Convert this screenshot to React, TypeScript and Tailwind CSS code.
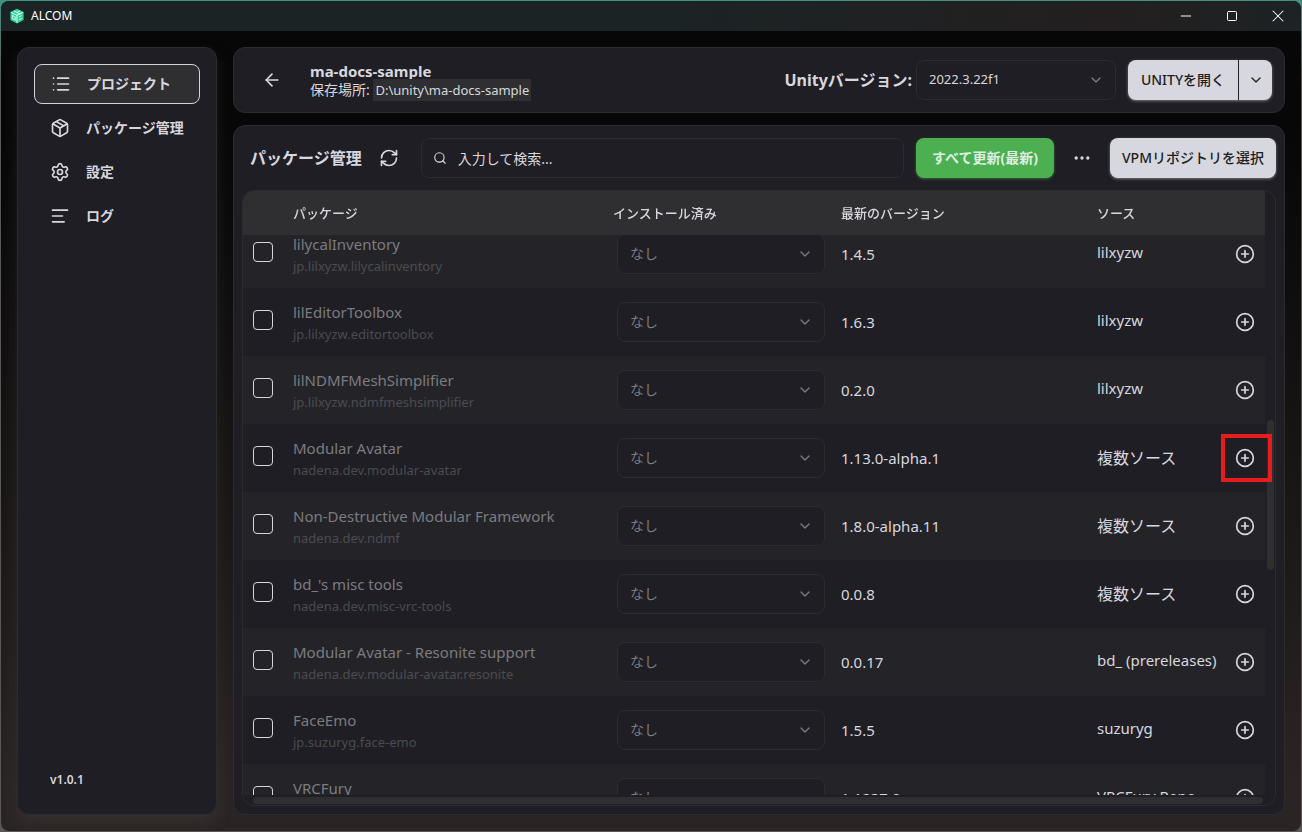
import { useEffect, useRef } from "react";
import {
  AlignLeft,
  ArrowLeft,
  ChevronDown,
  CirclePlus,
  Ellipsis,
  List,
  Minus,
  Package,
  RefreshCw,
  Search,
  Settings,
  Square,
  X,
} from "lucide-react";

type PackageRow = {
  name: string;
  id: string;
  latest: string;
  source: string;
  multipleSources?: boolean;
  highlighted?: boolean;
};

const packages: PackageRow[] = [
  { name: "lilycalInventory", id: "jp.lilxyzw.lilycalinventory", latest: "1.4.5", source: "lilxyzw" },
  { name: "lilEditorToolbox", id: "jp.lilxyzw.editortoolbox", latest: "1.6.3", source: "lilxyzw" },
  { name: "lilNDMFMeshSimplifier", id: "jp.lilxyzw.ndmfmeshsimplifier", latest: "0.2.0", source: "lilxyzw" },
  { name: "Modular Avatar", id: "nadena.dev.modular-avatar", latest: "1.13.0-alpha.1", source: "複数ソース", multipleSources: true, highlighted: true },
  { name: "Non-Destructive Modular Framework", id: "nadena.dev.ndmf", latest: "1.8.0-alpha.11", source: "複数ソース", multipleSources: true },
  { name: "bd_'s misc tools", id: "nadena.dev.misc-vrc-tools", latest: "0.0.8", source: "複数ソース", multipleSources: true },
  { name: "Modular Avatar - Resonite support", id: "nadena.dev.modular-avatar.resonite", latest: "0.0.17", source: "bd_ (prereleases)" },
  { name: "FaceEmo", id: "jp.suzuryg.face-emo", latest: "1.5.5", source: "suzuryg" },
  { name: "VRCFury", id: "com.vrcfury.vrcfury", latest: "1.1237.0", source: "VRCFury Repo" },
];

const navItems = [
  { label: "プロジェクト", icon: List, active: true },
  { label: "パッケージ管理", icon: Package, active: false },
  { label: "設定", icon: Settings, active: false },
  { label: "ログ", icon: AlignLeft, active: false },
];

function AppLogo() {
  return (
    <svg viewBox="0 0 16 16" className="size-4" aria-hidden="true">
      <path d="M8 .8 14.6 4v8L8 15.4 1.4 12V4Z" fill="#2fd19a" />
      <path d="M2 4.4 8 7.3v7.4M14 4.4 8 7.3M4.8 2.9l6.3 3M11.2 2.9 8 4.4" fill="none" stroke="#e4fff5" strokeWidth="1" />
      <path d="M3.4 7.4v3.2l2.8 1.5V8.9ZM9.8 9l2.8-1.4M9.8 11.8l2.8-1.4" fill="none" stroke="#d4fbec" strokeWidth="1" />
    </svg>
  );
}

function TitleBar() {
  return (
    <header className="flex h-[30px] shrink-0 items-center justify-between bg-linear-to-r from-[#1b2325] from-50% via-[#231f20] via-85% to-[#1d2224] pl-2 text-white">
      <div className="flex items-center gap-1.5 text-xs">
        <AppLogo />
        <span>ALCOM</span>
      </div>
      <div className="flex h-full">
        <button aria-label="最小化" className="flex w-[46px] items-center justify-center">
          <Minus className="size-4" strokeWidth={1.5} />
        </button>
        <button aria-label="最大化" className="flex w-[46px] items-center justify-center">
          <Square className="size-3" strokeWidth={2} />
        </button>
        <button aria-label="閉じる" className="flex w-[46px] items-center justify-center">
          <X className="size-5" strokeWidth={1.25} />
        </button>
      </div>
    </header>
  );
}

function Sidebar() {
  return (
    <aside className="flex w-[200px] shrink-0 flex-col justify-between rounded-xl border border-[#2c2c2f] bg-[#1f1e24] p-4 shadow-[0_8px_16px_rgba(85,85,80,0.25)]">
      <nav className="flex flex-col gap-1">
        {navItems.map(({ label, icon: Icon, active }) => (
          <a
            key={label}
            href="#"
            className={
              active
                ? "flex h-10 items-center gap-4 rounded-lg border border-[#d4d4da] bg-[#2f2f31] px-4 text-sm font-semibold whitespace-nowrap"
                : "flex h-10 items-center gap-4 rounded-lg px-4 text-sm font-semibold whitespace-nowrap"
            }
          >
            <Icon className="size-5 shrink-0" />
            {label}
          </a>
        ))}
      </nav>
      <p className="px-4 pt-2.5 pb-2 text-xs leading-5 font-semibold">v1.0.1</p>
    </aside>
  );
}

function ProjectHeader() {
  return (
    <section className="flex h-[66px] shrink-0 items-center rounded-xl border border-[#2c2c2f] bg-[#1f1e24] pr-3 pl-[18px]">
      <button aria-label="戻る" className="flex size-10 items-center justify-center">
        <ArrowLeft className="size-5" />
      </button>
      <div className="ml-[18px] flex-1 pt-px">
        <h1 className="text-[15px] leading-[18px] font-bold">ma-docs-sample</h1>
        <p className="text-sm leading-5">
          保存場所: <span className="bg-[#2f2f31] px-0.5 py-0.5 text-[13px]">D:\unity\ma-docs-sample</span>
        </p>
      </div>
      <label htmlFor="unity-version" className="mr-1 font-bold">
        Unityバージョン:
      </label>
      <div className="relative mr-3">
        <select
          id="unity-version"
          className="h-10 w-[200px] appearance-none rounded-lg border border-[#2c2c2f] bg-transparent px-3 text-[13px]"
        >
          <option>2022.3.22f1</option>
        </select>
        <ChevronDown className="pointer-events-none absolute top-3 right-3 size-4 opacity-50" />
      </div>
      <div className="flex h-10 divide-x divide-[#1f1e24] rounded-lg bg-[#d7d7df] text-[#1f1e24] shadow-[0_1px_3px_rgba(215,215,223,0.5)]">
        <button className="w-[111px] text-sm font-medium">UNITYを開く</button>
        <button aria-label="その他の起動方法" className="flex w-[33px] items-center justify-center">
          <ChevronDown className="size-4" />
        </button>
      </div>
    </section>
  );
}

function Toolbar() {
  return (
    <div className="flex items-center">
      <h2 className="ml-2 text-base font-bold">パッケージ管理</h2>
      <button aria-label="再読み込み" className="ml-[7px] flex size-10 items-center justify-center">
        <RefreshCw className="size-5" />
      </button>
      <div className="relative ml-3 flex-1">
        <Search className="absolute top-[13px] left-3 size-3.5" />
        <input
          type="search"
          aria-label="パッケージを検索"
          placeholder="入力して検索..."
          className="h-10 w-full rounded-lg border border-[#2c2c2f] bg-transparent pr-3 pl-9 text-sm placeholder:text-[#d7d7df]"
        />
      </div>
      <button className="ml-3 h-10 w-[138px] rounded-lg bg-[#4caf50] text-sm font-bold text-[#dfeee4] shadow-[0_1px_3px_rgba(76,175,80,0.5)]">
        すべて更新(最新)
      </button>
      <button aria-label="その他の操作" className="mx-2 flex size-10 items-center justify-center">
        <Ellipsis className="size-5" />
      </button>
      <button className="h-10 w-[166px] rounded-lg bg-[#d7d7df] text-sm font-medium whitespace-nowrap text-[#1f1e24] shadow-[0_1px_3px_rgba(215,215,223,0.5)]">
        VPMリポジトリを選択
      </button>
    </div>
  );
}

function PackageTableRow({ pkg }: { pkg: PackageRow }) {
  return (
    <tr className="h-[68px] odd:bg-[#242428]">
      <td className="pb-[5px] pl-2.5">
        <input
          type="checkbox"
          aria-label={pkg.name}
          className="block size-5 appearance-none rounded border border-[#d7d7df]"
        />
      </td>
      <td className="pl-2.5">
        <p className="text-[15px] leading-6 text-[#7b7b80]">{pkg.name}</p>
        <p className="text-[13px] leading-5 text-[#4b4b50]">{pkg.id}</p>
      </td>
      <td className="pb-px pl-3.5">
        <div className="relative w-52">
          <select
            aria-label={pkg.name + " のバージョン"}
            className="block h-10 w-full appearance-none rounded-lg border border-[#2c2c2f] bg-[#1f1e24] px-3 text-sm text-[#7b7b80]"
          >
            <option>なし</option>
          </select>
          <ChevronDown className="pointer-events-none absolute top-3 right-3 size-4 opacity-50" />
        </div>
      </td>
      <td className="pl-2.5 text-[15px]">{pkg.latest}</td>
      <td
        className={
          pkg.multipleSources
            ? "pl-2.5 text-base whitespace-nowrap"
            : "pb-1 pl-2.5 text-[15px] whitespace-nowrap"
        }
      >
        {pkg.source}
      </td>
      <td className="pb-px">
        <div className="relative flex size-10 items-center justify-center">
          <button aria-label={pkg.name + " を追加"}>
            <CirclePlus className="size-5" />
          </button>
          {pkg.highlighted && (
            <div className="pointer-events-none absolute -top-1 -right-[7px] -bottom-1 -left-1 z-20 border-4 border-[#e81c1c]" />
          )}
        </div>
      </td>
    </tr>
  );
}

function PackageTable() {
  const viewport = useRef<HTMLDivElement>(null);

  useEffect(() => {
    if (viewport.current) viewport.current.scrollTop = 15;
  }, []);

  return (
    <div className="relative mt-3 min-h-0 flex-1 overflow-hidden rounded-xl border border-[#2c2c2f] pb-2.5">
      <div ref={viewport} className="h-full overflow-auto pr-2.5 [scrollbar-width:none]">
        <table className="w-full table-fixed text-left">
          <colgroup>
            <col className="w-10" />
            <col className="w-80" />
            <col className="w-[228px]" />
            <col />
            <col className="w-[138px]" />
            <col className="w-10" />
          </colgroup>
          <thead className="sticky top-0 z-10 bg-[#2f2f31] text-[13px]">
            <tr className="h-11">
              <td />
              <th className="pt-0.5 pl-2.5 font-medium">パッケージ</th>
              <th className="pt-0.5 pl-2.5 font-medium">インストール済み</th>
              <th className="pt-0.5 pl-2.5 font-medium">最新のバージョン</th>
              <th className="pt-0.5 pl-2.5 font-medium">ソース</th>
              <td />
            </tr>
          </thead>
          <tbody>
            {packages.map((pkg) => (
              <PackageTableRow key={pkg.id} pkg={pkg} />
            ))}
          </tbody>
        </table>
      </div>
      <div className="absolute top-[229px] right-px h-[150px] w-[7px] rounded-full bg-[#2f2f31]" />
      <div className="absolute right-3 bottom-px left-2.5 h-[7px] rounded-full bg-[#2f2f31]" />
    </div>
  );
}

export default function App() {
  return (
    <div className="h-screen bg-linear-to-b from-[#3f9383] to-[#5a5856] to-10% p-px font-['Noto_Sans','Noto_Sans_CJK_JP',sans-serif] text-[#d7d7df]">
      <div className="flex h-full flex-col overflow-hidden rounded-lg bg-linear-to-b from-[#070707] from-15% to-[#2b2424] to-95%">
        <TitleBar />
        <div className="flex min-h-0 flex-1 gap-4 p-4">
          <Sidebar />
          <main className="flex min-w-0 flex-1 flex-col gap-3">
            <ProjectHeader />
            <section className="flex min-h-0 flex-1 flex-col rounded-xl border border-[#2c2c2f] bg-[#1f1e24] px-2 pt-3 pb-2">
              <Toolbar />
              <PackageTable />
            </section>
          </main>
        </div>
      </div>
    </div>
  );
}
